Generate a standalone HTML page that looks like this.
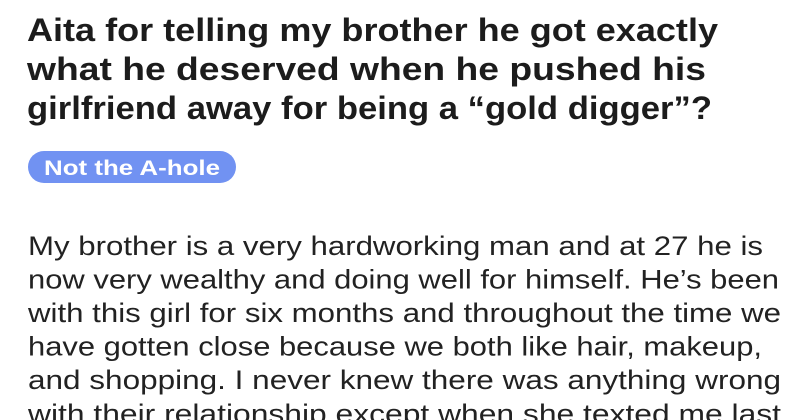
<!DOCTYPE html>
<html><head><meta charset="utf-8"><style>
html,body{margin:0;padding:0;background:#fff;width:800px;height:420px;overflow:hidden}
svg{display:block}
</style></head><body>
<svg width="800" height="420" xmlns="http://www.w3.org/2000/svg">
<g font-family="Liberation Sans, sans-serif" font-weight="bold" font-size="32" fill="#1c1c1c">
<text x="27" y="41" textLength="691" lengthAdjust="spacingAndGlyphs">Aita for telling my brother he got exactly</text>
<text x="27" y="80" textLength="679" lengthAdjust="spacingAndGlyphs">what he deserved when he pushed his</text>
<text x="27" y="119" textLength="685" lengthAdjust="spacingAndGlyphs">girlfriend away for being a “gold digger”?</text>
</g>
<rect x="28" y="151" width="208" height="32" rx="16" fill="#7192f2"/>
<text x="44" y="175" font-family="Liberation Sans, sans-serif" font-weight="bold" font-size="21" fill="#fff" textLength="176" lengthAdjust="spacingAndGlyphs">Not the A-hole</text>
<g font-family="Liberation Sans, sans-serif" font-size="27" fill="#222">
<text x="28" y="255" textLength="735" lengthAdjust="spacingAndGlyphs">My brother is a very hardworking man and at 27 he is</text>
<text x="28" y="288.5" textLength="751" lengthAdjust="spacingAndGlyphs">now very wealthy and doing well for himself. He’s been</text>
<text x="28" y="322" textLength="753" lengthAdjust="spacingAndGlyphs">with this girl for six months and throughout the time we</text>
<text x="28" y="355.5" textLength="734" lengthAdjust="spacingAndGlyphs">have gotten close because we both like hair, makeup,</text>
<text x="28" y="389" textLength="753" lengthAdjust="spacingAndGlyphs">and shopping. I never knew there was anything wrong</text>
<text x="28" y="423" textLength="753" lengthAdjust="spacingAndGlyphs">with their relationship except when she texted me last</text>
</g>
</svg>
</body></html>
